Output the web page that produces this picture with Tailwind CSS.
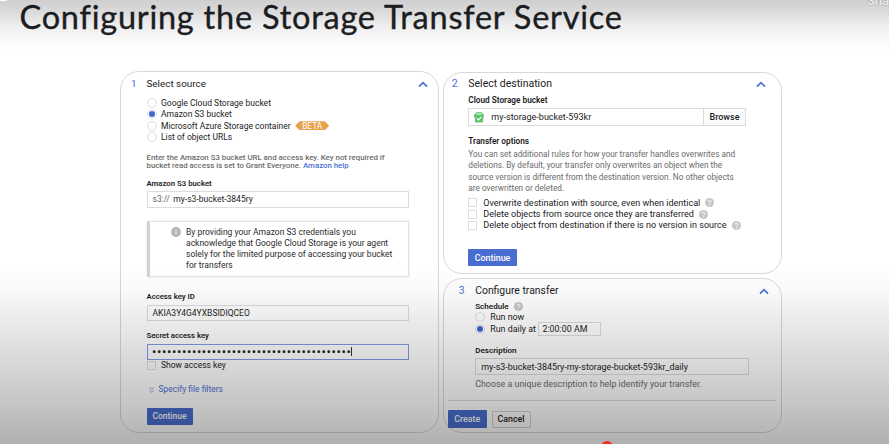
<!DOCTYPE html>
<html lang="en">
<head>
<meta charset="utf-8">
<title>Configuring the Storage Transfer Service</title>
<script src="https://cdn.jsdelivr.net/npm/@tailwindcss/browser@4"></script>
</head>
<body class="relative h-[444px] w-[889px] overflow-hidden bg-white font-[Roboto,'Liberation_Sans',sans-serif] text-[8.52px] leading-none text-[#1c1c1c] whitespace-nowrap">
<svg class="hidden">
  <symbol id="up" viewBox="0 0 10 7"><path d="M1 5.6 5 1.6 9 5.6" fill="none" stroke="#4a6fd4" stroke-width="1.7"/></symbol>
  <symbol id="help" viewBox="0 0 10 10"><circle cx="5" cy="5" r="5" fill="#c6c6c6"/><path d="M3.5 4a1.5 1.5 0 1 1 2.3 1.2c-.5.35-.8.6-.8 1.1" fill="none" stroke="#fff" stroke-width="1"/><circle cx="5" cy="7.6" r=".6" fill="#fff"/></symbol>
</svg>

<header class="flex h-[71px] items-start pl-[19.5px]">
  <h1 class="font-[Lato,sans-serif] text-[32.5px] leading-[34px] tracking-[0.77px] text-[#202124] [-webkit-text-stroke:0.35px_#202124]">Configuring the Storage Transfer Service</h1>
</header>

<main class="flex items-start gap-1 pl-[120px]">
  <section class="h-[362px] w-[319px] rounded-[19px] border border-[#d8d8d8] pr-[29.5px] pl-[25.5px]">
    <div class="relative flex h-6 items-center text-[9.89px]">
      <span class="ml-[-15.5px] w-[15.5px] text-[#4a6fd4]">1</span>
      <span>Select source</span>
      <svg class="absolute top-[9px] right-[-19.5px] h-[7px] w-[10px]"><use href="#up"/></svg>
    </div>
    <div class="mt-[1.5px]">
      <div class="flex h-[11.3px] items-center gap-[4.5px]"><i class="size-[10px] rounded-full border border-[#dedede]"></i>Google Cloud Storage bucket</div>
      <div class="flex h-[11.3px] items-center gap-[4.5px]"><i class="flex size-[10px] items-center justify-center rounded-full border border-[#dedede]"><b class="size-[6px] rounded-full bg-[#3f67d2]"></b></i>Amazon S3 bucket</div>
      <div class="flex h-[11.3px] items-center gap-[4.5px]"><i class="size-[10px] rounded-full border border-[#dedede]"></i><span class="pt-[1px]">Microsoft Azure Storage container</span>
        <span class="flex h-[9px] w-[34px] items-center justify-center bg-[#e8a24a] text-[8.3px] text-white [clip-path:polygon(0_50%,13%_0,87%_0,100%_50%,87%_100%,13%_100%)]">BETA</span></div>
      <div class="flex h-[11.3px] items-center gap-[4.5px]"><i class="size-[10px] rounded-full border border-[#dedede]"></i>List of object URLs</div>
    </div>
    <p class="mt-[11px] h-4 text-[7.83px] leading-[8px] font-medium text-[#6c6c6c]">Enter the Amazon S3 bucket URL and access key. Key not required if<br>bucket read access is set to Grant Everyone. <a class="text-[#4a6fd4]">Amazon help</a></p>
    <div class="mt-[9px] flex h-[10px] items-center text-[7.78px] font-semibold">Amazon S3 bucket</div>
    <div class="mt-[2px] flex h-[17px] items-center gap-[3.5px] border border-[#dcdcdc] pt-px pl-[5px]"><span class="text-[#666]">s3://</span><span>my-s3-bucket-3845ry</span></div>
    <div class="mt-[13px] flex h-14 gap-[5px] border border-l-[3px] border-[#e4e4e4] border-l-[#d2d2d2] pt-[5.5px] pl-[21.5px] shadow-[0_0_2px_#e4e4e4]">
      <svg class="h-[10px] w-[10px]" viewBox="0 0 10 10"><circle cx="5" cy="5" r="4.9" fill="#b4b4b4"/><path d="M5 4.3v3.3M5 2.2v1.2" stroke="#fff" stroke-width="1.1"/></svg>
      <p class="leading-[10.9px] text-[#2b2b2b]">By providing your Amazon S3 credentials you<br>acknowledge that Google Cloud Storage is your agent<br>solely for the limited purpose of accessing your bucket<br>for transfers</p>
    </div>
    <div class="mt-[15px] flex h-[10px] items-center text-[7.73px] font-semibold">Access key ID</div>
    <div class="mt-[3px] flex h-4 items-center border border-[#dcdcdc] pt-px pl-[5px]">AKIA3Y4G4YXBSIDIQCEO</div>
    <div class="mt-[10px] flex h-[10px] items-center text-[7.73px] font-semibold">Secret access key</div>
    <div class="mt-[3px] flex h-4 items-center border border-[#7f9be6] pl-[4.5px]"><span class="text-[13px] tracking-[0.6px]">••••••••••••••••••••••••••••••••••••••••</span><i class="h-[9px] w-px bg-[#333]"></i></div>
    <div class="mt-[1px] flex h-[10px] items-center gap-[5.5px]"><i class="mt-[-1px] size-[9px] border border-[#dedede]"></i>Show access key</div>
    <div class="mt-[14px] flex h-[10px] items-center gap-[5px] pl-[2px] text-[8.47px] text-[#4a6fd4]"><svg class="h-[6px] w-[5px]" viewBox="0 0 5 6" fill="none" stroke="#6f8cdb" stroke-width=".8"><path d="M.5.5l2 1.8 2-1.8M.5 3.4l2 1.8 2-1.8"/></svg>Specify file filters</div>
    <button class="mt-[13px] flex h-[17px] w-[46px] items-center justify-center rounded-[1px] bg-[#496dd0] text-[8.47px] font-medium text-white">Continue</button>
  </section>

  <div class="flex w-[339px] flex-col gap-1 pt-px">
    <section class="h-[202px] rounded-[19px] border border-[#d8d8d8] pr-[35px] pl-[24.3px]">
      <div class="relative flex h-[22px] items-center pt-px text-[10.5px]">
        <span class="ml-[-16.5px] w-[16.5px] text-[#4a6fd4]">2</span>
        <span>Select destination</span>
        <svg class="absolute top-[8px] right-[-20px] h-[7px] w-[10px]"><use href="#up"/></svg>
      </div>
      <div class="flex h-[10px] items-center text-[8.24px] font-semibold">Cloud Storage bucket</div>
      <div class="mt-[3px] flex h-[18px] border border-[#dcdcdc] text-[9.04px]">
        <div class="flex flex-1 items-center gap-[7px] pl-[5px]">
          <svg class="h-[11px] w-[10px]" viewBox="0 0 10 11"><path d="M1.2 3 2.6.9h4.8L8.8 3" fill="none" stroke="#5fc46c" stroke-width="1.2"/><path d="M0 2.6h10v2H9.5L8.8 10.4H1.2L.5 4.6H0z" fill="#5fc46c"/><path d="M2.8 6.4 4.4 8 7.4 4.9" fill="none" stroke="#fff" stroke-width="1.1"/></svg>
          <span class="pt-[1.5px]">my-storage-bucket-593kr</span>
        </div>
        <div class="flex w-[42px] items-center justify-center border-l border-[#dcdcdc] bg-[#fcfcfc] text-[9px] font-medium">Browse</div>
      </div>
      <div class="mt-[10px] flex h-[10px] items-center text-[8.23px] font-semibold">Transfer options</div>
      <p class="mt-[3px] h-[46px] text-[8.28px] leading-[11.4px] text-[#6c6c6c]">You can set additional rules for how your transfer handles overwrites and<br>deletions. By default, your transfer only overwrites an object when the<br>source version is different from the destination version. No other objects<br>are overwritten or deleted.</p>
      <div class="mt-[2px] text-[9.04px]">
        <div class="flex h-[11.4px] items-center gap-[6px]"><i class="size-[9px] border border-[#dedede]"></i><span class="pt-px">Overwrite destination with source, even when identical</span><svg class="ml-[-1px] size-[9px]"><use href="#help"/></svg></div>
        <div class="flex h-[11.4px] items-center gap-[6px]"><i class="size-[9px] border border-[#dedede]"></i>Delete objects from source once they are transferred<svg class="ml-[-1px] size-[9px]"><use href="#help"/></svg></div>
        <div class="flex h-[11.4px] items-center gap-[6px]"><i class="size-[9px] border border-[#dedede]"></i>Delete object from destination if there is no version in source<svg class="ml-[-1px] size-[9px]"><use href="#help"/></svg></div>
      </div>
      <button class="mt-[18px] flex h-[17px] w-[48.5px] items-center justify-center rounded-[1px] bg-[#496dd0] pt-px text-[8.9px] font-medium text-white">Continue</button>
    </section>

    <section class="h-[155px] rounded-[19px] border border-[#d8d8d8] pl-[4px]">
      <div class="pr-[32px] pl-[27.2px] text-[8.9px]">
        <div class="relative flex h-[23px] items-center pt-[2px] text-[10.4px]">
          <span class="ml-[-16.5px] w-[16.5px] text-[#4a6fd4]">3</span>
          <span>Configure transfer</span>
          <svg class="absolute top-[9px] right-[-20px] h-[7px] w-[10px]"><use href="#up"/></svg>
        </div>
        <div class="mt-[-1px] flex h-[10px] items-center gap-[5px] text-[8.09px] font-semibold">Schedule<svg class="size-[9px]"><use href="#help"/></svg></div>
        <div class="flex h-[11px] items-center gap-[5px]"><i class="size-[10px] rounded-full border border-[#dedede]"></i><span class="pt-px">Run now</span></div>
        <div class="flex h-[14px] items-center gap-[5px]"><i class="flex size-[10px] items-center justify-center rounded-full border border-[#dedede]"><b class="size-[6px] rounded-full bg-[#3f67d2]"></b></i>Run daily at<span class="ml-[-2.5px] flex h-[14px] w-[62.5px] items-center border border-[#dcdcdc] pl-[3px]">2:00:00 AM</span></div>
        <div class="mt-[9px] flex h-[10px] items-center text-[8.09px] font-semibold">Description</div>
        <div class="mt-[3px] flex h-[17px] items-center border border-[#dcdcdc] pt-px pl-[5px] text-[8.93px]">my-s3-bucket-3845ry-my-storage-bucket-593kr_daily</div>
        <p class="mt-[4px] h-[10px] leading-[10px] text-[#6c6c6c]">Choose a unique description to help identify your transfer.</p>
      </div>
      <div class="mt-[11px] mr-[5px] h-px bg-[#dcdcdc]"></div>
      <div class="mt-[9px] flex h-[18px] items-center gap-[5px] text-[8.8px] font-medium">
        <button class="flex h-[18px] w-[38.5px] items-center justify-center rounded-[1px] bg-[#496dd0] text-white">Create</button>
        <button class="flex h-[17px] w-[39px] items-center justify-center rounded-[1px] border border-[#d2d2d2]">Cancel</button>
      </div>
    </section>
  </div>
</main>

<div class="pointer-events-none absolute inset-x-0 top-0 h-[55px] bg-[linear-gradient(to_bottom,rgba(0,0,0,.19),rgba(0,0,0,.15)_20%,rgba(0,0,0,.07)_45%,rgba(0,0,0,.02)_75%,transparent)]"></div>
<div class="pointer-events-none absolute inset-x-0 bottom-0 h-[176px] bg-[linear-gradient(to_bottom,transparent,rgba(0,0,0,.025)_12%,rgba(0,0,0,.13)_46%,rgba(0,0,0,.22)_75%,rgba(0,0,0,.31))]"></div>
<i class="absolute top-[-5px] left-[-4px] h-[6px] w-[12px] rounded-full bg-white"></i>
<span class="absolute top-[-7px] left-[867px] text-[13px] leading-[15px] font-medium text-white/80 [text-shadow:0_0_2px_#888]">Share</span>
<i class="absolute top-[441px] left-[601px] size-[12px] rounded-full bg-[#f22c22]"></i>
</body>
</html>
